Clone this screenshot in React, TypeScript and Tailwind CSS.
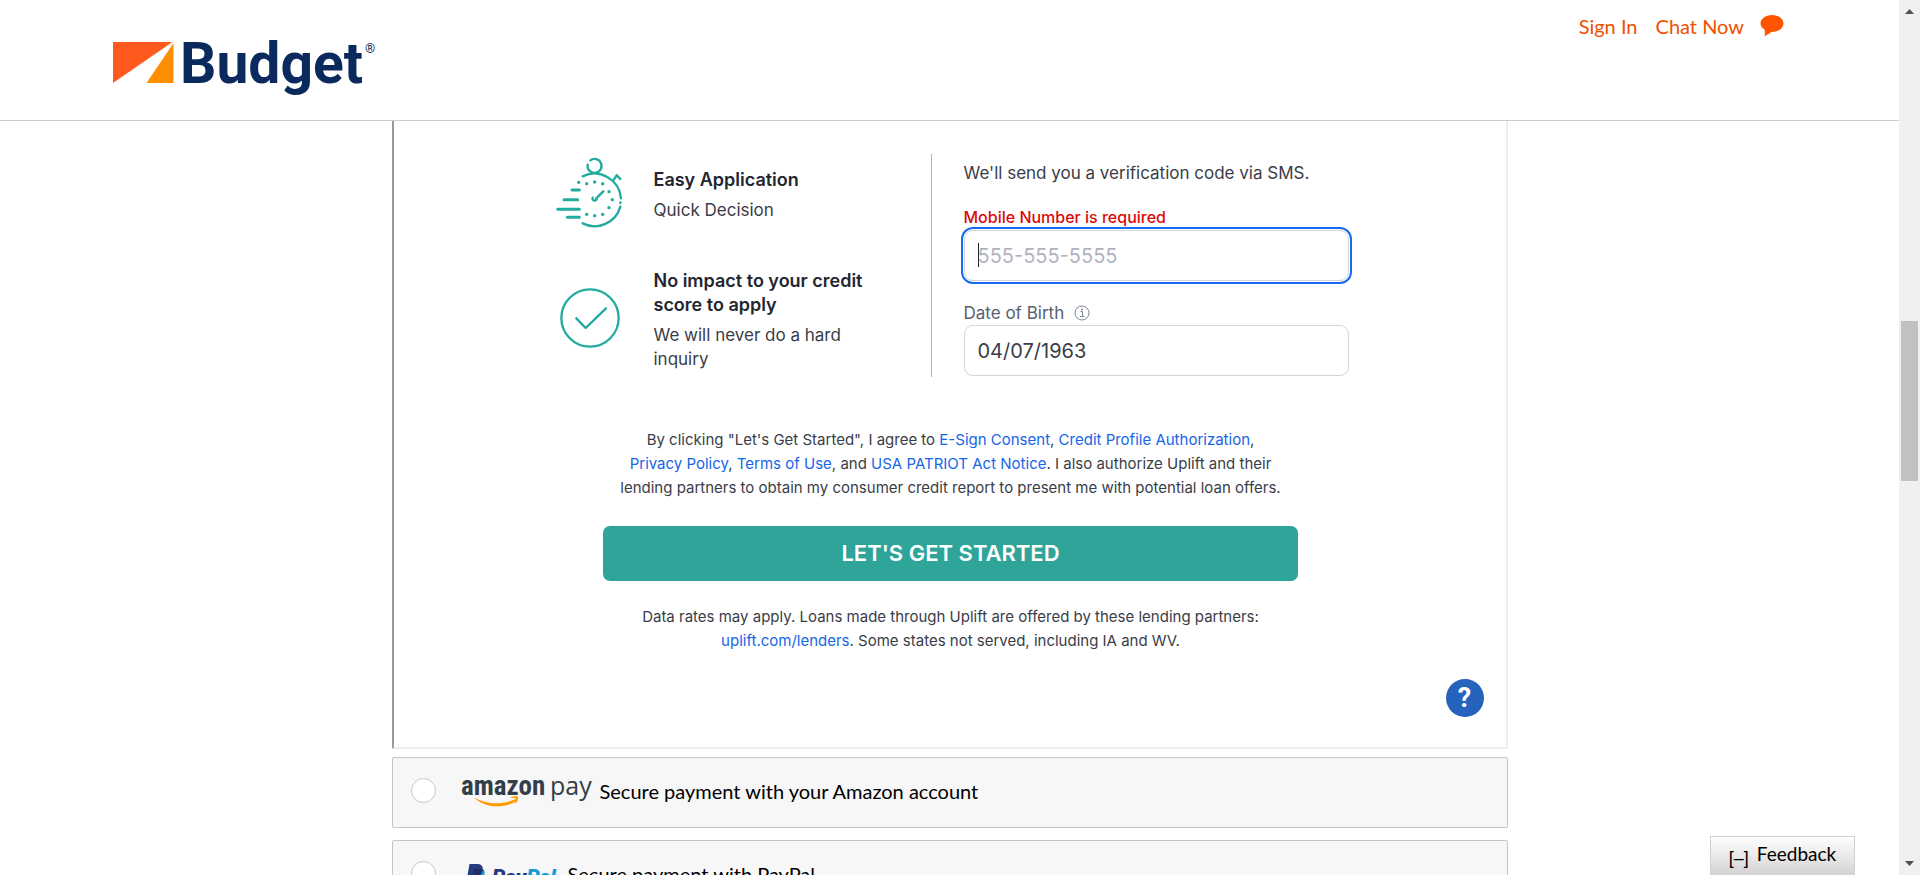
import React from "react";

const sans = "font-['Lato','Open_Sans',sans-serif]";
const widget = "font-['Inter','Roboto',sans-serif]";

function BudgetLogo() {
  return (
    <svg width="270" height="62" viewBox="0 0 270 62" className="overflow-visible" role="img" aria-label="Budget">
      <path d="M0 0H59.5L0 41Z" fill="#ff5a1e" />
      <path d="M60.5 1V41H33.5Z" fill="#ff8f00" />
      <text x="67" y="41" fontFamily="Roboto, sans-serif" fontWeight="700" fontSize="57" fill="#0a2a5e">
        Budget
      </text>
      <text x="252" y="11" fontFamily="Roboto, sans-serif" fontSize="13" fill="#0a2a5e">
        ®
      </text>
    </svg>
  );
}

function ChatBubble() {
  return (
    <svg width="24" height="22" viewBox="0 0 24 22" aria-hidden="true">
      <path d="M12 0C18.5 0 23.5 3.8 23.5 8.4S18.5 17 12 17C10.500 17 9.500 18.500 4.500 21.500C5 19 5 17 4.500 14.500C2 13 .5 10.800 .5 8.400C.5 3.800 5.500 0 12 0Z" fill="#ff5500" />
    </svg>
  );
}

function Stopwatch() {
  const dots = [
    [86, 97], [110, 101], [134, 96], [158, 101], [177, 125],
    [187, 149], [177, 173], [158, 193], [134, 197], [110, 193],
  ];
  return (
    <svg width="68" height="72" viewBox="18 18 204 216" fill="none" stroke="#22ab9f" strokeWidth="7" strokeLinecap="round" aria-hidden="true">
      <path d="M98 79A80 80 0 0 1 213 145" />
      <path d="M211 170A80 80 0 0 1 98 220" />
      <path d="M121 31A21 21 0 1 1 113 44" />
      <path d="M190 91L200 76L213 89" strokeLinecap="butt" />
      <path d="M138 146L160 124M128 143A6 6 0 1 0 140 148" />
      <path d="M66 120H88M42 149H83M23 178H88M52 202H88" strokeWidth="9" />
      <circle cx="211" cy="158" r="4" fill="#22ab9f" stroke="none" />
      {dots.map(([x, y]) => (
        <circle key={`${x}-${y}`} cx={x} cy={y} r="5" fill="#22ab9f" stroke="none" />
      ))}
    </svg>
  );
}

function CheckCircle() {
  return (
    <svg width="60" height="60" viewBox="0 0 180 180" fill="none" stroke="#22ab9f" strokeWidth="7" strokeLinecap="round" strokeLinejoin="round" aria-hidden="true">
      <circle cx="90" cy="90" r="86" />
      <path d="M49 91L77 120L138 61" />
    </svg>
  );
}

function InfoIcon() {
  return (
    <svg width="16" height="16" viewBox="0 0 16 16" fill="none" stroke="#7d8694" aria-hidden="true">
      <circle cx="8" cy="8" r="7" />
      <path d="M6.500 6.500H8.500V11.500M6 11.500H10.500" />
      <circle cx="8" cy="4.500" r="1" fill="#7d8694" stroke="none" />
    </svg>
  );
}

function AmazonPayLogo() {
  return (
    <svg width="130" height="37" viewBox="0 -7 130 37" className="overflow-visible" role="img" aria-label="amazon pay">
      <text x="-1" y="16" fontFamily="'Liberation Sans Narrow', 'Roboto Condensed', Roboto, sans-serif" fontWeight="700" fontSize="27" fill="#333e48">
        amazon
      </text>
      <text x="88" y="16" fontFamily="'Open Sans', sans-serif" fontSize="25" fill="#333e48">
        pay
      </text>
      <path d="M12 18.500C24 25.500 40 26.500 54 20L55 22C41 30 22 29 12 18.500Z" fill="#ff9900" />
      <path d="M48 18.300C51 17.200 54 17 56 17.600C56.300 20.500 55 23.500 53 25.500C53.800 23 54.200 21 54 19.600C52.500 19.200 50 19.300 48 18.300Z" fill="#ff9900" />
    </svg>
  );
}

function PayPalLogo() {
  return (
    <svg width="94" height="37" viewBox="0 -7 94 37" className="overflow-visible" role="img" aria-label="PayPal">
      <path d="M8 7H17C18.500 8 19 10 18.500 12C17.500 16 14.500 18 11 18H9L7.500 25H3Z" fill="#179bd7" />
      <path d="M3.500 2H11C15.500 2 17.500 4.500 16.500 8.500C15.500 13 12 15 8 15H6L4.500 22H0Z" fill="#253b80" />
      <path d="M8 7H16.800C16.500 12 13 15 8 15H6.500Z" fill="#222d65" />
      <text x="26" y="22" fontFamily="Roboto, sans-serif" fontWeight="900" fontStyle="italic" fontSize="21" fill="#253b80">
        Pay
        <tspan fill="#179bd7">Pal</tspan>
      </text>
    </svg>
  );
}

function PaymentOption({ id, logo, children }: { id: string; logo: React.ReactNode; children: React.ReactNode }) {
  return (
    <div className="flex items-center rounded-xs border border-[#c4c4c4] bg-[#f7f7f7] px-[18px] pt-5 pb-6">
      <input
        type="radio"
        id={id}
        name="payment"
        className="size-[25px] shrink-0 appearance-none rounded-full border border-[#c8c8c8] bg-white"
      />
      <label htmlFor={id} className="-my-1.5 ml-[26px] flex items-center gap-2 text-xl leading-6 whitespace-nowrap text-black">
        {logo}
        <span>{children}</span>
      </label>
    </div>
  );
}

function TextLink({ children }: { children: React.ReactNode }) {
  return (
    <a href="#" className="text-[#1666e8]">
      {children}
    </a>
  );
}

const inputClass =
  "block h-[51px] w-full rounded-[9px] border border-[#d3d4d8] bg-white px-[13px] text-xl text-[#3a3d48] outline-none";

function UpliftWidget() {
  return (
    <section className={`border-r-2 border-b-2 border-l-2 border-r-[#eee] border-b-[#eee] border-l-[#9a9a9a] pt-[33px] text-[#3a3d48] ${widget}`}>
      <div className="mx-auto flex w-[798px] pl-[5px]">
        <div className="flex flex-col gap-[41px] pt-0.5 pr-[37px]">
          <div className="flex gap-[30px]">
            <div className="flex w-[68px] justify-center">
              <Stopwatch />
            </div>
            <div className="flex w-[240px] flex-col gap-1.5 pt-3 leading-6">
              <h3 className="text-lg leading-6 font-semibold text-[#22262f]">Easy Application</h3>
              <p className="text-[17px]">Quick Decision</p>
            </div>
          </div>
          <div className="flex gap-[30px]">
            <div className="flex w-[68px] justify-center pt-[19px]">
              <CheckCircle />
            </div>
            <div className="flex w-[240px] flex-col gap-1.5 leading-6">
              <h3 className="text-lg leading-6 font-semibold text-[#22262f]">No impact to your credit score to apply</h3>
              <p className="text-[17px]">We will never do a hard inquiry</p>
            </div>
          </div>
        </div>
        <form className="flex-1 border-l border-[#aeb1bd] pt-[7px] pb-px pl-8" onSubmit={(e) => e.preventDefault()}>
          <p className="text-[17px] leading-6">We'll send you a verification code via SMS.</p>
          <label htmlFor="mobile" className="mt-[22px] mb-[3px] block text-base leading-5 font-medium text-[#d90a0a]">
            Mobile Number is required
          </label>
          <div className="relative">
            <input
              id="mobile"
              type="tel"
              placeholder="555-555-5555"
              className={`${inputClass} outline-2 outline-offset-1 outline-solid outline-[#176bf0] placeholder:text-[#b0b3bd]`}
            />
            <span className="absolute top-[13px] left-[14px] h-6 w-px bg-[#22262f]" />
          </div>
          <div className="mt-[22px] mb-0.5 flex items-center gap-2.5 text-[17px] leading-5 text-[#566070]">
            <label htmlFor="dob">Date of Birth</label>
            <InfoIcon />
          </div>
          <input id="dob" type="text" defaultValue="04/07/1963" className={inputClass} />
        </form>
      </div>

      <div className="mx-auto mt-[51px] w-[697px] pl-0.5 text-center text-[15px] leading-6">
        <p className="whitespace-nowrap">
          By clicking "Let's Get Started", I agree to <TextLink>E-Sign Consent</TextLink>,{" "}
          <TextLink>Credit Profile Authorization</TextLink>,
          <br />
          <TextLink>Privacy Policy</TextLink>, <TextLink>Terms of Use</TextLink>, and{" "}
          <TextLink>USA PATRIOT Act Notice</TextLink>. I also authorize Uplift and their
          <br />
          lending partners to obtain my consumer credit report to present me with potential loan offers.
        </p>
        <button type="button" className="mt-[26px] h-[55px] w-full rounded-[7px] bg-[#2fa59a] pb-0.5 text-[22px] font-semibold text-white">
          LET'S GET STARTED
        </button>
        <p className="mt-6">
          Data rates may apply. Loans made through Uplift are offered by these lending partners:
          <br />
          <TextLink>uplift.com/lenders</TextLink>. Some states not served, including IA and WV.
        </p>
      </div>

      <div className="mt-[26px] flex justify-end pr-[22px] pb-[30px]">
        <button type="button" aria-label="Help" className="size-[38px] rounded-full bg-[#2563bd] font-['Roboto',sans-serif] text-[27px] leading-none font-bold text-white">
          ?
        </button>
      </div>
    </section>
  );
}

function Scrollbar() {
  return (
    <div className="flex w-[21px] shrink-0 flex-col items-center bg-[#f0f0f0]" aria-hidden="true">
      <svg width="9" height="5" viewBox="0 0 9 5" className="mt-[9px]">
        <path d="M4.500 0L9 5H0Z" fill="#505050" />
      </svg>
      <div className="flex w-[17px] flex-1 flex-col">
        <div className="flex-[307]" />
        <div className="flex-[160] bg-[#c1c1c1]" />
        <div className="flex-[380]" />
      </div>
      <svg width="9" height="5" viewBox="0 0 9 5" className="mb-[9px]">
        <path d="M0 0H9L4.500 5Z" fill="#505050" />
      </svg>
    </div>
  );
}

export default function App() {
  return (
    <div className={`flex h-screen overflow-hidden bg-white ${sans}`}>
      <div className="flex min-w-0 flex-1 flex-col overflow-hidden">
        <header className="flex items-start justify-between border-b border-[#ccc] pr-[115px] pb-4 pl-[113px]">
          <a href="#" className="pt-[42px]">
            <BudgetLogo />
          </a>
          <nav className="flex gap-[18px] pt-3.5 text-xl leading-6 text-[#f05000]">
            <a href="#">Sign In</a>
            <a href="#" className="flex items-center gap-4">
              Chat Now
              <ChatBubble />
            </a>
          </nav>
        </header>
        <main className="mx-auto flex min-h-0 w-[1116px] flex-1 flex-col overflow-hidden">
          <UpliftWidget />
          <div className="mt-2 flex flex-col gap-3">
            <PaymentOption id="amazon" logo={<AmazonPayLogo />}>
              Secure payment with your Amazon account
            </PaymentOption>
            <PaymentOption id="paypal" logo={<span className="pl-1"><PayPalLogo /></span>}>
              Secure payment with PayPal
            </PaymentOption>
          </div>
        </main>
      </div>
      <button
        type="button"
        className="fixed right-[65px] bottom-0 flex h-[39px] w-[145px] items-start justify-center gap-2 border border-b-0 border-[#d0d0d0] bg-linear-to-b from-white to-[#d3d3d3] pt-[5px] text-[19px] leading-6 text-black"
      >
        <span className="pt-1 font-['Liberation_Sans',sans-serif] text-lg leading-6">[–]</span>
        Feedback
      </button>
      <Scrollbar />
    </div>
  );
}
